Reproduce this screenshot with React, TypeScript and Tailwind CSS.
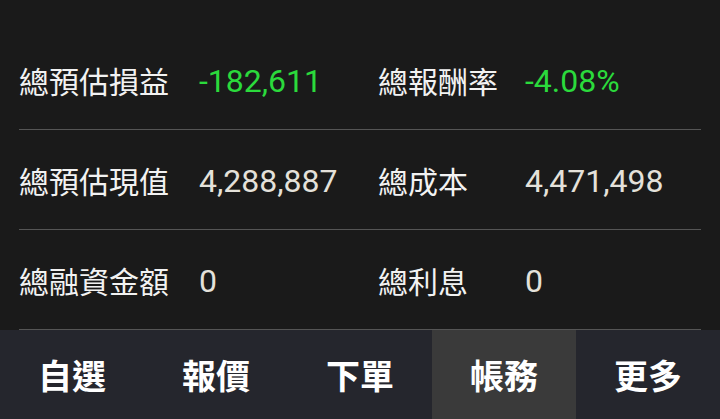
const rows = [
  { l1: '總預估損益', v1: '-182,611', l2: '總報酬率', v2: '-4.08%', green: true },
  { l1: '總預估現值', v1: '4,288,887', l2: '總成本', v2: '4,471,498', green: false },
  { l1: '總融資金額', v1: '0', l2: '總利息', v2: '0', green: false },
];

const tabs = ['自選', '報價', '下單', '帳務', '更多'];

const cjk = "font-['Noto_Sans_CJK_TC',sans-serif]";
const num = "font-['Roboto','Noto_Sans_CJK_TC',sans-serif]";

export default function App() {
  return (
    <div className="w-[720px] h-[419px] bg-[#1a1a1a] flex flex-col overflow-hidden">
      <div className="pt-[30px] flex-1">
        {rows.map((r) => (
          <div
            key={r.l1}
            className="mx-[19px] h-[100px] border-b border-[#555555] grid grid-cols-[180px_179px_147px_1fr] items-center"
          >
            <span className={`${cjk} text-[30px] leading-none text-[#f2f2f2]`}>{r.l1}</span>
            <span className={`${num} text-[32px] leading-none pt-[2px] ${r.green ? 'text-[#2bda3c]' : 'text-[#e4e1da]'}`}>
              {r.v1}
            </span>
            <span className={`${cjk} text-[30px] leading-none text-[#f2f2f2]`}>{r.l2}</span>
            <span className={`${num} text-[32px] leading-none pt-[2px] ${r.green ? 'text-[#2bda3c]' : 'text-[#e4e1da]'}`}>
              {r.v2}
            </span>
          </div>
        ))}
      </div>
      <nav className="h-[89px] bg-[#25262d] grid grid-cols-5">
        {tabs.map((t) => (
          <div
            key={t}
            className={`flex items-center justify-center ${t === '帳務' ? 'bg-[#3a3a3a]' : ''}`}
          >
            <span className={`${cjk} text-[34px] font-bold leading-none text-white`}>{t}</span>
          </div>
        ))}
      </nav>
    </div>
  );
}
